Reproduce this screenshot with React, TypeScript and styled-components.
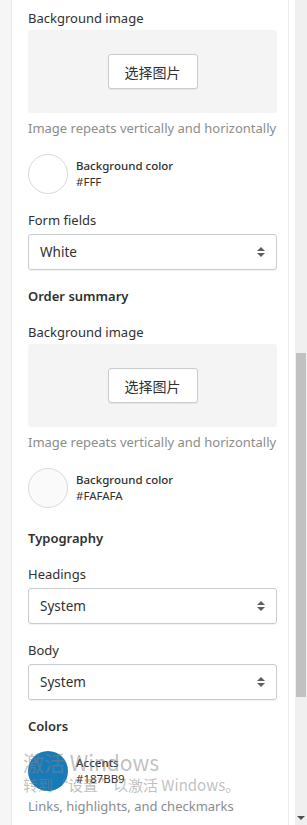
import React from "react";
import styled, { createGlobalStyle } from "styled-components";

const GlobalStyle = createGlobalStyle`
  html, body {
    margin: 0;
    padding: 0;
    background: #f6f6f7;
  }
  body {
    font-family: "Noto Sans", "Noto Sans CJK SC", sans-serif;
    color: #303030;
  }
`;

const Frame = styled.div`
  display: flex;
  width: 307px;
  height: 825px;
  overflow: hidden;
  position: relative;
  background: #f6f6f7;
`;

const Panel = styled.div`
  margin-left: 11px;
  width: 278px;
  border-left: 1px solid #e6e6e6;
  border-right: 1px solid #ececec;
  background: #fff;
  padding: 8px 11px 0 16px;
  box-sizing: border-box;
  display: flex;
  flex-direction: column;
`;

const Gap = styled.div`
  width: 6px;
  background: #fff;
`;

const Track = styled.div`
  width: 12px;
  background: #f0f0f0;
  display: flex;
  flex-direction: column;
  align-items: center;
`;

const Thumb = styled.div`
  margin-top: 353px;
  width: 10px;
  height: 344px;
  background: #c1c1c1;
`;

const DownArrow = styled.div`
  margin-top: auto;
  margin-bottom: 5px;
  width: 0;
  height: 0;
  border-left: 4px solid transparent;
  border-right: 4px solid transparent;
  border-top: 4px solid #505050;
`;

const Label = styled.div<{ $top?: number }>`
  font-size: 13px;
  line-height: 18px;
  margin-top: ${(p) => p.$top ?? 0}px;
  color: #303030;
`;

const Heading = styled.div<{ $top?: number }>`
  font-size: 13px;
  font-weight: 600;
  line-height: 18px;
  margin-top: ${(p) => p.$top ?? 0}px;
  color: #303030;
`;

const DropZone = styled.div`
  margin-top: 3px;
  height: 83px;
  background: #f4f4f4;
  border-radius: 3px;
  display: flex;
  align-items: center;
  justify-content: center;
`;

const PickButton = styled.button`
  width: 90px;
  height: 35px;
  background: #fff;
  border: 1px solid #c9cccf;
  border-radius: 3px;
  box-shadow: 0 1px 0 rgba(0, 0, 0, 0.06);
  font-family: "Noto Sans CJK SC", sans-serif;
  font-size: 14px;
  color: #303030;
  padding: 0;
`;

const Help = styled.div`
  margin-top: 5px;
  font-size: 13px;
  line-height: 20px;
  color: #8c8c8c;
  white-space: nowrap;
`;

const Swatch = styled.div`
  display: flex;
  align-items: center;
  gap: 8px;
  margin-top: 16px;
`;

const Circle = styled.div<{ $color: string; $bordered?: boolean }>`
  width: 40px;
  height: 40px;
  border-radius: 50%;
  box-sizing: border-box;
  background: ${(p) => p.$color};
  border: ${(p) => (p.$bordered ? "1px solid #d9d9d9" : "none")};
  flex-shrink: 0;
`;

const SwatchText = styled.div`
  display: flex;
  flex-direction: column;
  font-size: 11.5px;
  line-height: 16px;
  color: #303030;
`;

const SwatchName = styled.span`
  font-weight: 500;
`;

const Select = styled.div`
  margin-top: 5px;
  height: 36px;
  border: 1px solid #c9cccf;
  border-radius: 3px;
  box-sizing: border-box;
  display: flex;
  align-items: center;
  justify-content: space-between;
  padding: 0 10px 0 11px;
  font-size: 13.5px;
  color: #303030;
  box-shadow: 0 1px 0 rgba(0, 0, 0, 0.05);
`;

const Watermark = styled.div`
  position: absolute;
  left: 23px;
  top: 752px;
  pointer-events: none;
  color: rgba(130, 130, 130, 0.5);
  font-family: "Noto Sans CJK SC", sans-serif;
  line-height: 1;
`;

const WaterBig = styled.div`
  font-size: 21px;
`;

const WaterSmall = styled.div`
  margin-top: 4px;
  font-size: 15px;
`;

function Stepper() {
  return (
    <svg width="10" height="14" viewBox="0 0 10 14">
      <path d="M5 2 L9 6 H1 Z" fill="#5c5f62" />
      <path d="M5 12 L9 8 H1 Z" fill="#5c5f62" />
    </svg>
  );
}

function ImagePicker({ top }: { top: number }) {
  return (
    <>
      <Label $top={top}>Background image</Label>
      <DropZone>
        <PickButton>选择图片</PickButton>
      </DropZone>
      <Help>Image repeats vertically and horizontally</Help>
    </>
  );
}

function ColorRow({ name, value, bordered }: { name: string; value: string; bordered?: boolean }) {
  return (
    <Swatch>
      <Circle $color={value} $bordered={bordered} />
      <SwatchText>
        <SwatchName>{name}</SwatchName>
        <span>{value.toUpperCase()}</span>
      </SwatchText>
    </Swatch>
  );
}

function Dropdown({ value }: { value: string }) {
  return (
    <Select>
      <span>{value}</span>
      <Stepper />
    </Select>
  );
}

export default function App() {
  return (
    <>
      <GlobalStyle />
      <Frame>
        <Panel>
          <ImagePicker top={1} />
          <ColorRow name="Background color" value="#FFF" bordered />
          <Label $top={17}>Form fields</Label>
          <Dropdown value="White" />
          <Heading $top={17}>Order summary</Heading>
          <ImagePicker top={18} />
          <ColorRow name="Background color" value="#FAFAFA" bordered />
          <Heading $top={21}>Typography</Heading>
          <Label $top={18}>Headings</Label>
          <Dropdown value="System" />
          <Label $top={17}>Body</Label>
          <Dropdown value="System" />
          <Heading $top={17}>Colors</Heading>
          <ColorRow name="Accents" value="#187BB9" />
          <Help>Links, highlights, and checkmarks</Help>
        </Panel>
        <Gap />
        <Track>
          <Thumb />
          <DownArrow />
        </Track>
        <Watermark>
          <WaterBig>激活 Windows</WaterBig>
          <WaterSmall>转到“设置”以激活 Windows。</WaterSmall>
        </Watermark>
      </Frame>
    </>
  );
}
